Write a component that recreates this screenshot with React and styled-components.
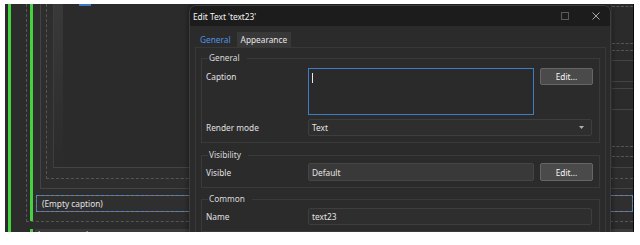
import React from "react";
import styled, { createGlobalStyle } from "styled-components";

const GlobalStyle = createGlobalStyle`
  html, body { margin: 0; padding: 0; background: #ffffff; }
  body { font-family: "Noto Sans", "Open Sans", sans-serif; }
  * { box-sizing: border-box; }
`;

const Screen = styled.div`
  position: relative;
  margin: 4px 0 0 5px;
  width: 629px;
  height: 228px;
  background: #2a2a2a;
  border-right: 1px solid #0a0a0a;
  overflow: hidden;
  padding-left: 3px;
`;

const GreenLane = styled.div`
  display: flex;
  flex-direction: column;
  border-left: 3px solid #46d13e;
  background: #2c2c2c;
  height: 100%;
`;

const DashedBox = styled.div`
  margin-left: 15px;
  height: 218px;
  border-left: 1px dashed #555;
  border-bottom: 1px dashed #555;
  padding-left: 3px;
  display: flex;
  flex-shrink: 0;
`;

const InnerGreen = styled.div`
  flex: 1;
  border-left: 3px solid #46d13e;
  display: flex;
  flex-direction: column;
  background: #2d2d2d;
`;

const Frame = styled.div`
  margin-left: 7px;
  height: 185px;
  border-left: 1px solid #444;
  border-bottom: 1px solid #444;
  padding-left: 5px;
  display: flex;
  background: #2e2e2e;
`;

const DashedInner = styled.div`
  flex: 1;
  height: 175px;
  border-left: 1px dashed #555;
  border-bottom: 1px dashed #555;
  padding-left: 6px;
  display: flex;
`;

const InnerBox = styled.div`
  flex: 1;
  height: 164px;
  border-left: 1px solid #3e3e3e;
  border-bottom: 1px solid #444;
  display: flex;
  background: #2b2b2b;
`;

const Strip = styled.div`
  width: 9px;
  background: linear-gradient(#393939, #2f2f2f 70%, #2b2b2b);
`;

const InnerContent = styled.div`
  flex: 1;
  display: flex;
  justify-content: space-between;
`;

const Handle = styled.div`
  margin-left: 16px;
  width: 12px;
  height: 2px;
  background: #3b78c8;
`;

const SideStack = styled.div`
  width: 22px;
  margin-right: 0;
  border-left: 1px solid #3a3a3a;
  display: flex;
  flex-direction: column;
`;

const SideLine = styled.div`
  height: ${(p) => p.$gap}px;
  border-bottom: 1px ${(p) => (p.$dashed ? "dashed" : "solid")} ${(p) => (p.$dashed ? "#555" : "#444")};
  flex-shrink: 0;
`;

const CaptionField = styled.div`
  margin: 6px 0 0 3px;
  height: 17px;
  border: 1px dashed #4a86d4;
  background: linear-gradient(#2f2f2f, #2f2f2f) padding-box,
    linear-gradient(#85683f, #85683f) border-box;
  color: #e2e2e2;
  font-size: 8.3px;
  line-height: 15px;
  padding-left: 5px;
  white-space: nowrap;
`;

const NextRow = styled.div`
  margin: 7px 0 0 19px;
  border-left: 3px solid #46d13e;
  padding-left: 2px;
  height: 20px;
  flex-shrink: 0;
`;

const NextBar = styled.div`
  height: 20px;
  background: #3a3a3a;
  color: #ddd;
  font-size: 8.3px;
  line-height: 12px;
  padding-left: 3px;
`;

/* Dialog */
const Dialog = styled.div`
  position: absolute;
  left: 184px;
  top: 1px;
  width: 422px;
  height: 240px;
  background: #2b2b2b;
  border: 1px solid #3d3d3d;
  border-radius: 7px 7px 0 0;
  overflow: hidden;
  display: flex;
  flex-direction: column;
  box-shadow: 0 0 6px rgba(0, 0, 0, 0.5);
`;

const TitleBar = styled.div`
  height: 20px;
  flex-shrink: 0;
  background: #1c1c1c;
  display: flex;
  align-items: center;
  padding-left: 3px;
  color: #f4f4f4;
  font-size: 8.3px;
`;

const Title = styled.span`
  flex: 1;
`;

const TitleButton = styled.span`
  width: ${(p) => p.$w}px;
  height: 20px;
  display: flex;
  align-items: center;
  justify-content: center;
`;

const Body = styled.div`
  padding: 6px 4px 0 5px;
  display: flex;
  flex-direction: column;
  flex: 1;
`;

const TabBar = styled.div`
  display: flex;
  height: 15px;
  gap: 1px;
`;

const Tab = styled.div`
  padding: 0 ${(p) => (p.$active ? 5 : 4)}px;
  font-size: 8.3px;
  line-height: 15px;
  color: ${(p) => (p.$active ? "#4f92e3" : "#e6e6e6")};
  background: ${(p) => (p.$active ? "transparent" : "#383838")};
`;

const Panel = styled.div`
  flex: 1;
  border: 1px solid #383838;
  border-bottom: none;
  background: #2b2b2b;
  padding: 4px 5px 0 5px;
  display: flex;
  flex-direction: column;
`;

const Group = styled.fieldset`
  margin: 0;
  margin-top: ${(p) => p.$mt || 0}px;
  border: 1px solid #3a3a3a;
  padding: 0 6px ${(p) => p.$pb}px 4px;
  display: flex;
  flex-direction: column;
  gap: 4px;
  min-width: 0;
`;

const Legend = styled.legend`
  font-size: 8.3px;
  line-height: 12px;
  color: #dadada;
  padding: 0 7px 0 1px;
  margin-left: 2px;
`;

const Row = styled.div`
  display: flex;
  align-items: ${(p) => (p.$top ? "flex-start" : "center")};
  gap: 6px;
  margin-top: ${(p) => p.$mt || 0}px;
`;

const Label = styled.div`
  width: 96px;
  font-size: 8.3px;
  line-height: 17px;
  color: #e0e0e0;
  flex-shrink: 0;
`;

const TextArea = styled.div`
  width: 226px;
  height: 47px;
  border: 1px solid #3f7cc6;
  background: #2a2a2a;
  padding: 4px 3px;
  flex-shrink: 0;
`;

const Caret = styled.div`
  width: 1px;
  height: 10px;
  background: #e8e8e8;
`;

const Field = styled.div`
  width: ${(p) => p.$w}px;
  height: ${(p) => p.$h}px;
  border: 1px solid ${(p) => (p.$raised ? "#454545" : "#3e3e3e")};
  background: ${(p) => (p.$raised ? "#393939" : "#2e2e2e")};
  border-radius: 2px;
  color: #e4e4e4;
  font-size: 8.3px;
  padding: 0 7px 0 3px;
  display: flex;
  align-items: center;
  justify-content: space-between;
  flex-shrink: 0;
`;

const Button = styled.div`
  width: 53px;
  height: ${(p) => p.$h}px;
  border: 1px solid #666;
  background: #4a4a4a;
  border-radius: 2px;
  color: #f6f6f6;
  font-size: 8.3px;
  display: flex;
  align-items: center;
  justify-content: center;
  flex-shrink: 0;
`;

const sideLines = [
  { g: 3, d: true },
  { g: 37, d: true },
  { g: 7, d: true },
  { g: 10 },
  { g: 21 },
  { g: 7 },
  { g: 21 },
  { g: 37, d: true },
  { g: 10, d: true },
];

export default function App() {
  return (
    <>
      <GlobalStyle />
      <Screen>
        <GreenLane>
          <DashedBox>
            <InnerGreen>
              <Frame>
                <DashedInner>
                  <InnerBox>
                    <Strip />
                    <InnerContent>
                      <Handle />
                      <SideStack>
                        {sideLines.map((s, i) => (
                          <SideLine key={i} $gap={s.g} $dashed={s.d} />
                        ))}
                      </SideStack>
                    </InnerContent>
                  </InnerBox>
                </DashedInner>
              </Frame>
              <CaptionField>(Empty caption)</CaptionField>
            </InnerGreen>
          </DashedBox>
          <NextRow>
            <NextBar>Layout panel</NextBar>
          </NextRow>
        </GreenLane>

        <Dialog>
          <TitleBar>
            <Title>Edit Text 'text23'</Title>
            <TitleButton $w={34}>
              <svg width="8" height="8" viewBox="0 0 8 8">
                <rect x="0.5" y="0.5" width="7" height="7" fill="none" stroke="#5a5a5a" />
              </svg>
            </TitleButton>
            <TitleButton $w={28}>
              <svg width="8" height="8" viewBox="0 0 8 8">
                <path d="M0.5 0.5 L7.5 7.5 M7.5 0.5 L0.5 7.5" stroke="#a8a8a8" strokeWidth="1" />
              </svg>
            </TitleButton>
          </TitleBar>
          <Body>
            <TabBar>
              <Tab $active>General</Tab>
              <Tab>Appearance</Tab>
            </TabBar>
            <Panel>
              <Group $pb={6}>
                <Legend>General</Legend>
                <Row $top $mt={4}>
                  <Label>Caption</Label>
                  <TextArea>
                    <Caret />
                  </TextArea>
                  <Button $h={17}>Edit...</Button>
                </Row>
                <Row>
                  <Label>Render mode</Label>
                  <Field $w={284} $h={17}>
                    Text
                    <svg width="5" height="3" viewBox="0 0 5 3">
                      <path d="M0 0 L5 0 L2.5 3 Z" fill="#b0b0b0" />
                    </svg>
                  </Field>
                </Row>
              </Group>
              <Group $pb={6} $mt={6}>
                <Legend>Visibility</Legend>
                <Row $mt={2}>
                  <Label>Visible</Label>
                  <Field $w={226} $h={18} $raised>
                    Default
                  </Field>
                  <Button $h={18}>Edit...</Button>
                </Row>
              </Group>
              <Group $pb={6} $mt={5}>
                <Legend>Common</Legend>
                <Row $mt={3}>
                  <Label>Name</Label>
                  <Field $w={284} $h={17}>
                    text23
                  </Field>
                </Row>
              </Group>
            </Panel>
          </Body>
        </Dialog>
      </Screen>
    </>
  );
}
